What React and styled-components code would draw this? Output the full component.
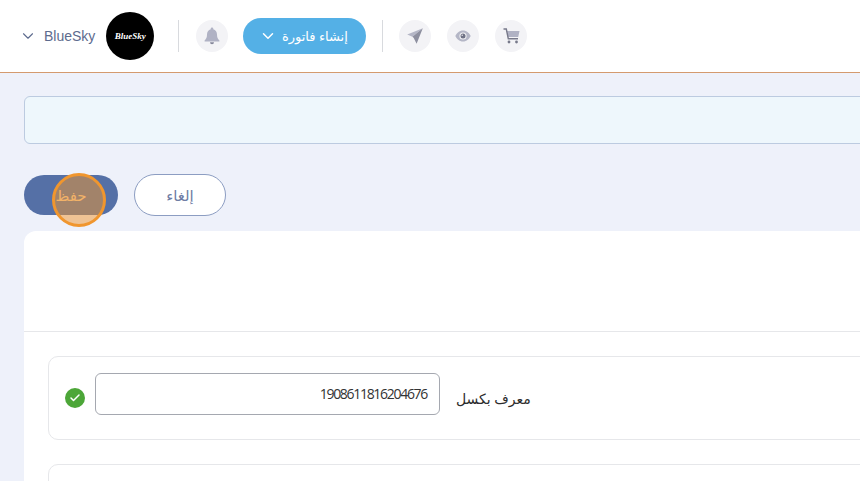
import React from "react";
import styled, { createGlobalStyle } from "styled-components";
import { ChevronDown, Check } from "lucide-react";

const GlobalStyle = createGlobalStyle`
  html, body {
    margin: 0;
    padding: 0;
    width: 860px;
    height: 481px;
    overflow: hidden;
    background: #eef1fa;
    font-family: "Noto Sans", "Open Sans", "DejaVu Sans", sans-serif;
  }
`;

const Page = styled.div`
  position: relative;
  width: 860px;
  height: 481px;
  overflow: hidden;
  background: #eef1fa;
`;

const Header = styled.header`
  display: flex;
  align-items: center;
  height: 72px;
  padding-left: 19px;
  background: #fff;
  border-bottom: 1px solid #d49a6e;
`;

const UserMenu = styled.div`
  display: flex;
  align-items: center;
  color: #5d6b8e;
  font-size: 14px;
  font-family: "Liberation Sans", sans-serif;
  svg {
    margin-right: 7px;
  }
`;

const Logo = styled.div`
  display: flex;
  align-items: center;
  justify-content: center;
  width: 48px;
  height: 48px;
  margin-left: 11px;
  border-radius: 50%;
  background: #000;
  color: #fff;
  font-family: "Liberation Serif", serif;
  font-style: italic;
  font-weight: 700;
  font-size: 9px;
`;

const Divider = styled.div`
  width: 1px;
  height: 32px;
  margin: 0 ${(p) => p.$right || 16}px 0 ${(p) => p.$left || 16}px;
  background: #d8dade;
`;

const IconCircle = styled.div`
  display: flex;
  align-items: center;
  justify-content: center;
  width: 32px;
  height: 32px;
  margin-right: ${(p) => p.$gap || 0}px;
  border-radius: 50%;
  background: #f3f3f6;
  color: #b0b2c4;
`;

const CreateButton = styled.div`
  display: flex;
  align-items: center;
  justify-content: center;
  gap: 5px;
  box-sizing: border-box;
  width: 123px;
  height: 36px;
  margin-left: 15px;
  padding-right: 3px;
  border-radius: 18px;
  background: #54b0e6;
  color: #fff;
  font-size: 13px;
  svg {
    flex-shrink: 0;
  }
`;

const Content = styled.main`
  width: 1000px;
  padding: 23px 0 0 24px;
`;

const Notice = styled.div`
  height: 46px;
  border: 1px solid #bccbe0;
  border-radius: 6px;
  background: #eef7fc;
`;

const Actions = styled.div`
  display: flex;
  align-items: center;
  gap: 16px;
  margin-top: 30px;
`;

const SaveButton = styled.div`
  display: flex;
  align-items: center;
  justify-content: center;
  width: 94px;
  height: 40px;
  border-radius: 20px;
  background: #5570a6;
  color: #f5cfa3;
  font-size: 15px;
`;

const CancelButton = styled.div`
  display: flex;
  align-items: center;
  justify-content: center;
  width: 90px;
  height: 40px;
  border: 1px solid #8c9dc2;
  border-radius: 21px;
  background: #fff;
  color: #6d7ca3;
  font-size: 15px;
`;

const Card = styled.section`
  margin-top: 15px;
  border-radius: 12px 12px 0 0;
  background: #fff;
  height: 300px;
`;

const CardHead = styled.div`
  height: 100px;
  border-bottom: 1px solid #e6e7ea;
`;

const CardBody = styled.div`
  display: flex;
  flex-direction: column;
  gap: 24px;
  padding: 24px 0 0 24px;
`;

const FieldBox = styled.div`
  display: flex;
  align-items: center;
  height: 82px;
  padding-left: 16px;
  border: 1px solid #e6e7ea;
  border-radius: 10px;
`;

const StatusDot = styled.div`
  display: flex;
  align-items: center;
  justify-content: center;
  width: 20px;
  height: 20px;
  margin-right: 10px;
  border-radius: 50%;
  background: #4ca638;
  color: #fff;
`;

const ValueInput = styled.div`
  display: flex;
  align-items: center;
  justify-content: flex-end;
  box-sizing: border-box;
  width: 345px;
  height: 42px;
  margin-bottom: 8px;
  padding: 0 12px 2px 0;
  border: 1px solid #a5a8b0;
  border-radius: 6px;
  color: #333;
  font-size: 14px;
  letter-spacing: -1.3px;
  font-family: "Open Sans", sans-serif;
`;

const FieldLabel = styled.div`
  margin-left: 16px;
  color: #2c2c2c;
  font-size: 14px;
`;

const ClickMarker = styled.div`
  position: absolute;
  left: 52px;
  top: 173px;
  box-sizing: border-box;
  width: 54px;
  height: 54px;
  border: 3px solid #f0962e;
  border-radius: 50%;
  background: rgba(240, 150, 46, 0.5);
`;

const BellIcon = () => (
  <svg width="16" height="18" viewBox="0 0 16 18" fill="currentColor">
    <path d="M8 .5a1.3 1.3 0 0 1 1.3 1.3v.5C11.7 3 13 5 13 7.5c0 3 .8 4.4 2.4 6v.9H.6v-.9C2.2 11.9 3 10.5 3 7.5 3 5 4.3 3 6.7 2.3v-.5A1.3 1.3 0 0 1 8 .5z" />
    <path d="M6 15.3h4a2 2 0 0 1-4 0z" fill="#85879a" />
  </svg>
);

const SendIcon = () => (
  <svg width="16" height="16" viewBox="0 0 16 16">
    <path d="M15.8.2.2 6.4l5.2 2.3L15.8.2z" fill="#b4b6c6" />
    <path d="M15.8.2 5.4 8.7l1.2 1.1 3 5.9L15.8.2z" fill="#8d8f9f" />
  </svg>
);

const EyeIcon = () => (
  <svg width="16" height="12" viewBox="0 0 16 12">
    <path fill="#b4b6c6" d="M8 .5C4.3.5 1.6 3.2.3 6c1.3 2.8 4 5.500 7.700 5.500s6.400-2.700 7.700-5.500C14.400 3.200 11.700.5 8 .5z" />
    <circle cx="8" cy="6" r="3.600" fill="#f3f3f6" />
    <circle cx="8" cy="6" r="2.500" fill="#6f7285" />
    <circle cx="7.200" cy="5.200" r=".7" fill="#f3f3f6" />
  </svg>
);

const CartIcon = () => (
  <svg width="17" height="16" viewBox="0 0 17 16" fill="none">
    <path d="M4 3h12.500l-1.300 6H5.200z" fill="#b0b2c4" />
    <path d="M.5 1h2.800l2 9.700h9.700" stroke="#77798a" strokeWidth="1.400" />
    <circle cx="6" cy="14" r="1.400" fill="#77798a" />
    <circle cx="13.500" cy="14" r="1.400" fill="#77798a" />
  </svg>
);

export default function App() {
  return (
    <Page>
      <GlobalStyle />
      <Header>
        <UserMenu>
          <ChevronDown size={18} strokeWidth={1.5} />
          BlueSky
        </UserMenu>
        <Logo>BlueSky</Logo>
        <Divider $left={24} $right={17} />
        <IconCircle>
          <BellIcon />
        </IconCircle>
        <CreateButton>
          <ChevronDown size={18} strokeWidth={2} />
          <span>إنشاء فاتورة</span>
        </CreateButton>
        <Divider />
        <IconCircle $gap={16}>
          <SendIcon />
        </IconCircle>
        <IconCircle $gap={16}>
          <EyeIcon />
        </IconCircle>
        <IconCircle>
          <CartIcon />
        </IconCircle>
      </Header>
      <Content>
        <Notice />
        <Actions>
          <SaveButton>حفظ</SaveButton>
          <CancelButton>إلغاء</CancelButton>
        </Actions>
        <Card>
          <CardHead />
          <CardBody>
            <FieldBox>
              <StatusDot>
                <Check size={12} strokeWidth={3} />
              </StatusDot>
              <ValueInput>1908611816204676</ValueInput>
              <FieldLabel>معرف بكسل</FieldLabel>
            </FieldBox>
            <FieldBox />
          </CardBody>
        </Card>
      </Content>
      <ClickMarker />
    </Page>
  );
}
